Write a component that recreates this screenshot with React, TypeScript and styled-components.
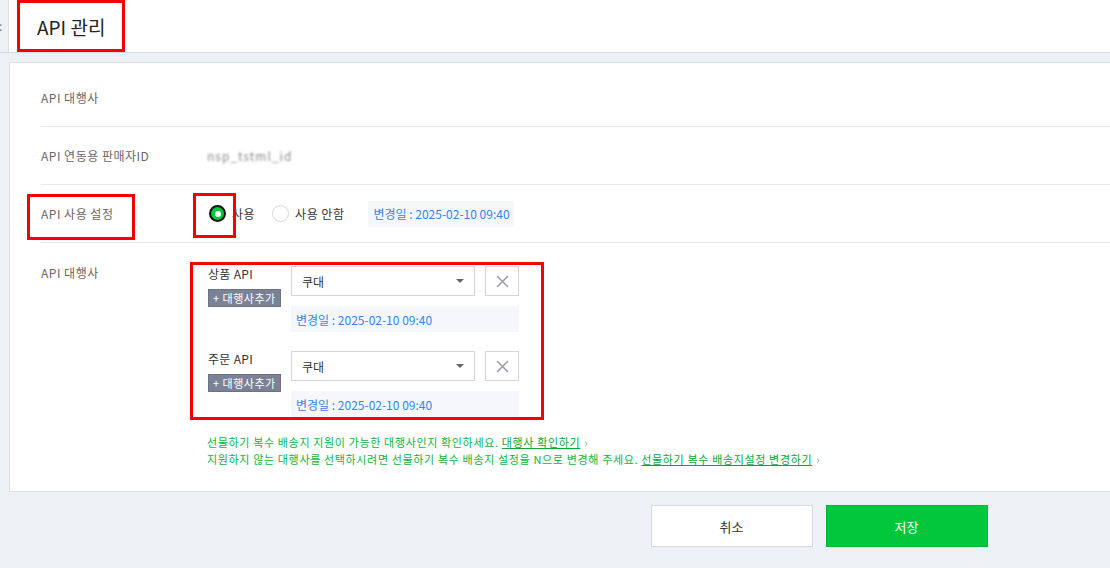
import React from "react";
import styled, {createGlobalStyle} from "styled-components";

const GlobalStyle = createGlobalStyle`
    html, body {
        margin: 0;
        overflow: hidden;
        background: #edf0f4;
        font-family: "Noto Sans CJK KR", "Noto Sans", "Liberation Sans", sans-serif;
        color: #333;
    }
`;

const StyledPage = styled.div`
    width: 1640px;
    min-height: 568px;
`;

const StyledTopBar = styled.div`
    display: flex;
    height: 52px;
    border-bottom: 1px solid #d7dbe0;
`;

const StyledSideStrip = styled.div`
    width: 8px;
    border-right: 1px solid #dcdfe4;
    background: #edf0f4;
    color: #777;
    font-size: 12px;
    line-height: 52px;
    overflow: hidden;
    text-indent: -1px;
`;

const StyledHeader = styled.div`
    flex: 1;
    display: flex;
    background: #fff;
    padding-left: 8px;
`;

const StyledTitle = styled.h1`
    position: relative;
    margin: 0;
    padding: 0 20px;
    display: flex;
    align-items: center;
    font-size: 19px;
    font-weight: 400;
    color: #222;
`;

const StyledMark = styled.span<{$t: number; $l: number; $r: number; $b: number}>`
    position: absolute;
    top: ${p => p.$t}px;
    left: ${p => p.$l}px;
    right: ${p => p.$r}px;
    bottom: ${p => p.$b}px;
    border: 3px solid #f40000;
    pointer-events: none;
`;

const StyledPanel = styled.div`
    margin: 9px 0 0 9px;
    background: #fff;
    border: 1px solid #dcdfe4;
    padding: 6px 0 0 31px;
`;

const StyledRow = styled.div<{$last?: boolean}>`
    display: grid;
    grid-template-columns: 166px 1fr;
    min-height: 57px;
    align-items: ${p => (p.$last ? "start" : "center")};
    border-bottom: ${p => (p.$last ? "none" : "1px solid #e6e8eb")};
`;

const StyledLabel = styled.div<{$top?: number}>`
    position: relative;
    font-size: 12px;
    letter-spacing: 0.5px;
    color: #666;
    padding-top: ${p => p.$top ?? 0}px;
`;

const StyledValue = styled.div`
    display: flex;
    align-items: center;
    font-size: 12px;
    color: #333;
`;

const StyledBlurred = styled.span`
    color: #8a8a8a;
    filter: blur(1.2px);
    letter-spacing: 1px;
`;

const StyledRadioGroup = styled.div`
    display: flex;
    align-items: center;
    margin-left: 2px;
`;

const StyledRadioItem = styled.label`
    position: relative;
    display: flex;
    align-items: center;
    gap: 6px;
    margin-right: 17px;
    font-size: 12px;
    letter-spacing: 0.5px;
    color: #333;
`;

const StyledRadio = styled.span<{$checked?: boolean}>`
    box-sizing: border-box;
    width: 17px;
    height: 17px;
    border-radius: 50%;
    border: ${p => (p.$checked ? "2px solid #111" : "1px solid #d4d6da")};
    background: ${p => (p.$checked ? "#00c73c" : "#fff")};
    display: flex;
    align-items: center;
    justify-content: center;

    &::after {
        content: "";
        display: ${p => (p.$checked ? "block" : "none")};
        width: 6px;
        height: 6px;
        border-radius: 50%;
        background: #fff;
    }
`;

const StyledDate = styled.div<{$wide?: boolean}>`
    box-sizing: border-box;
    flex-shrink: 0;
    height: 26px;
    display: flex;
    align-items: center;
    padding: 0 4px 0 5px;
    white-space: nowrap;
    background: #f5f7fb;
    color: #2f86f0;
    font-size: 12px;
    width: ${p => (p.$wide ? "228px" : "auto")};
    margin: ${p => (p.$wide ? "10px 0 0" : "0 0 0 7px")};
`;

const StyledAgencyCell = styled.div`
    padding: 19px 0 23px;
`;

const StyledAgencyBox = styled.div`
    position: relative;
    display: flex;
    flex-direction: column;
    gap: 19px;
    width: fit-content;
    margin-left: -17px;
    padding: 4px 25px 3px 18px;
`;

const StyledApiGroup = styled.div`
    display: grid;
    grid-template-columns: 83px 228px;
`;

const StyledApiTitle = styled.div`
    display: flex;
    flex-direction: column;
    align-items: flex-start;
    gap: 8px;
    font-size: 12px;
    letter-spacing: 0.3px;
    color: #333;
    line-height: 15px;
`;

const StyledAddButton = styled.button`
    height: 18px;
    padding: 0 4px;
    border: 1px solid #6c7384;
    background: #7b8295;
    color: #fff;
    font-family: inherit;
    font-size: 11px;
    letter-spacing: 0.5px;
    line-height: 16px;
`;

const StyledSelectRow = styled.div`
    display: flex;
    gap: 10px;
`;

const StyledSelect = styled.div`
    box-sizing: border-box;
    width: 184px;
    height: 30px;
    border: 1px solid #d3d5d9;
    display: flex;
    align-items: center;
    justify-content: space-between;
    padding: 0 10px 0 10px;
    font-size: 12px;
    color: #333;

    &::after {
        content: "";
        border-left: 4px solid transparent;
        border-right: 4px solid transparent;
        border-top: 4px solid #666;
    }
`;

const StyledCloseButton = styled.button`
    box-sizing: border-box;
    width: 34px;
    height: 30px;
    border: 1px solid #d3d5d9;
    background: #fff;
    display: flex;
    align-items: center;
    justify-content: center;
    padding: 0;
`;

const StyledNotes = styled.div`
    margin-top: 14px;
    font-size: 11px;
    line-height: 17px;
    color: #0cb63c;
    letter-spacing: 0.65px;
`;

const StyledNoteLink = styled.a`
    color: #0aa838;
    text-decoration: underline;
`;

const StyledArrow = styled.span`
    color: #5aa86e;
    margin-left: 4px;
`;

const StyledButtons = styled.div`
    display: flex;
    justify-content: center;
    gap: 13px;
    padding: 13px 2px 0 0;
`;

const StyledButton = styled.button<{$primary?: boolean}>`
    width: 162px;
    height: 42px;
    border: 1px solid ${p => (p.$primary ? "#00b83a" : "#d6d9dd")};
    background: ${p => (p.$primary ? "#00c73c" : "#fff")};
    color: ${p => (p.$primary ? "#fff" : "#333")};
    font-family: inherit;
    font-size: 13px;
`;

const CloseIcon = () => (
    <svg width="13" height="13" viewBox="0 0 13 13">
        <path d="M1 1 L12 12 M12 1 L1 12" stroke="#9a9ea6" strokeWidth="1.6"/>
    </svg>
);

const ApiGroup = ({title}: {title: string}) => (
    <StyledApiGroup>
        <StyledApiTitle>
            <span>{title}</span>
            <StyledAddButton>+ 대행사추가</StyledAddButton>
        </StyledApiTitle>
        <div>
            <StyledSelectRow>
                <StyledSelect>쿠대</StyledSelect>
                <StyledCloseButton><CloseIcon/></StyledCloseButton>
            </StyledSelectRow>
            <StyledDate $wide>변경일 : 2025-02-10 09:40</StyledDate>
        </div>
    </StyledApiGroup>
);

const App = () => {
    return (
        <StyledPage>
            <GlobalStyle/>
            <StyledTopBar>
                <StyledSideStrip>:</StyledSideStrip>
                <StyledHeader>
                    <StyledTitle>
                        API 관리
                        <StyledMark $t={0} $l={0} $r={0} $b={0}/>
                    </StyledTitle>
                </StyledHeader>
            </StyledTopBar>
            <StyledPanel>
                <StyledRow>
                    <StyledLabel>API 대행사</StyledLabel>
                    <StyledValue/>
                </StyledRow>
                <StyledRow>
                    <StyledLabel>API 연동용 판매자ID</StyledLabel>
                    <StyledValue><StyledBlurred>nsp_tstml_id</StyledBlurred></StyledValue>
                </StyledRow>
                <StyledRow>
                    <StyledLabel>
                        API 사용 설정
                        <StyledMark $t={-11} $l={-14} $r={72} $b={-18}/>
                    </StyledLabel>
                    <StyledValue>
                        <StyledRadioGroup>
                            <StyledRadioItem>
                                <StyledRadio $checked/>
                                <StyledMark $t={-12} $l={-16} $r={19} $b={-16}/>
                                사용
                            </StyledRadioItem>
                            <StyledRadioItem>
                                <StyledRadio/>
                                사용 안함
                            </StyledRadioItem>
                        </StyledRadioGroup>
                        <StyledDate>변경일 : 2025-02-10 09:40</StyledDate>
                    </StyledValue>
                </StyledRow>
                <StyledRow $last>
                    <StyledLabel $top={21}>API 대행사</StyledLabel>
                    <StyledAgencyCell>
                        <StyledAgencyBox>
                            <ApiGroup title="상품 API"/>
                            <ApiGroup title="주문 API"/>
                            <StyledMark $t={0} $l={0} $r={0} $b={0}/>
                        </StyledAgencyBox>
                        <StyledNotes>
                            <div>
                                선물하기 복수 배송지 지원이 가능한 대행사인지 확인하세요.{" "}
                                <StyledNoteLink>대행사 확인하기</StyledNoteLink>
                                <StyledArrow>›</StyledArrow>
                            </div>
                            <div>
                                지원하지 않는 대행사를 선택하시려면 선물하기 복수 배송지 설정을 N으로 변경해 주세요.{" "}
                                <StyledNoteLink>선물하기 복수 배송지설정 변경하기</StyledNoteLink>
                                <StyledArrow>›</StyledArrow>
                            </div>
                        </StyledNotes>
                    </StyledAgencyCell>
                </StyledRow>
            </StyledPanel>
            <StyledButtons>
                <StyledButton>취소</StyledButton>
                <StyledButton $primary>저장</StyledButton>
            </StyledButtons>
        </StyledPage>
    );
};

export default App;
